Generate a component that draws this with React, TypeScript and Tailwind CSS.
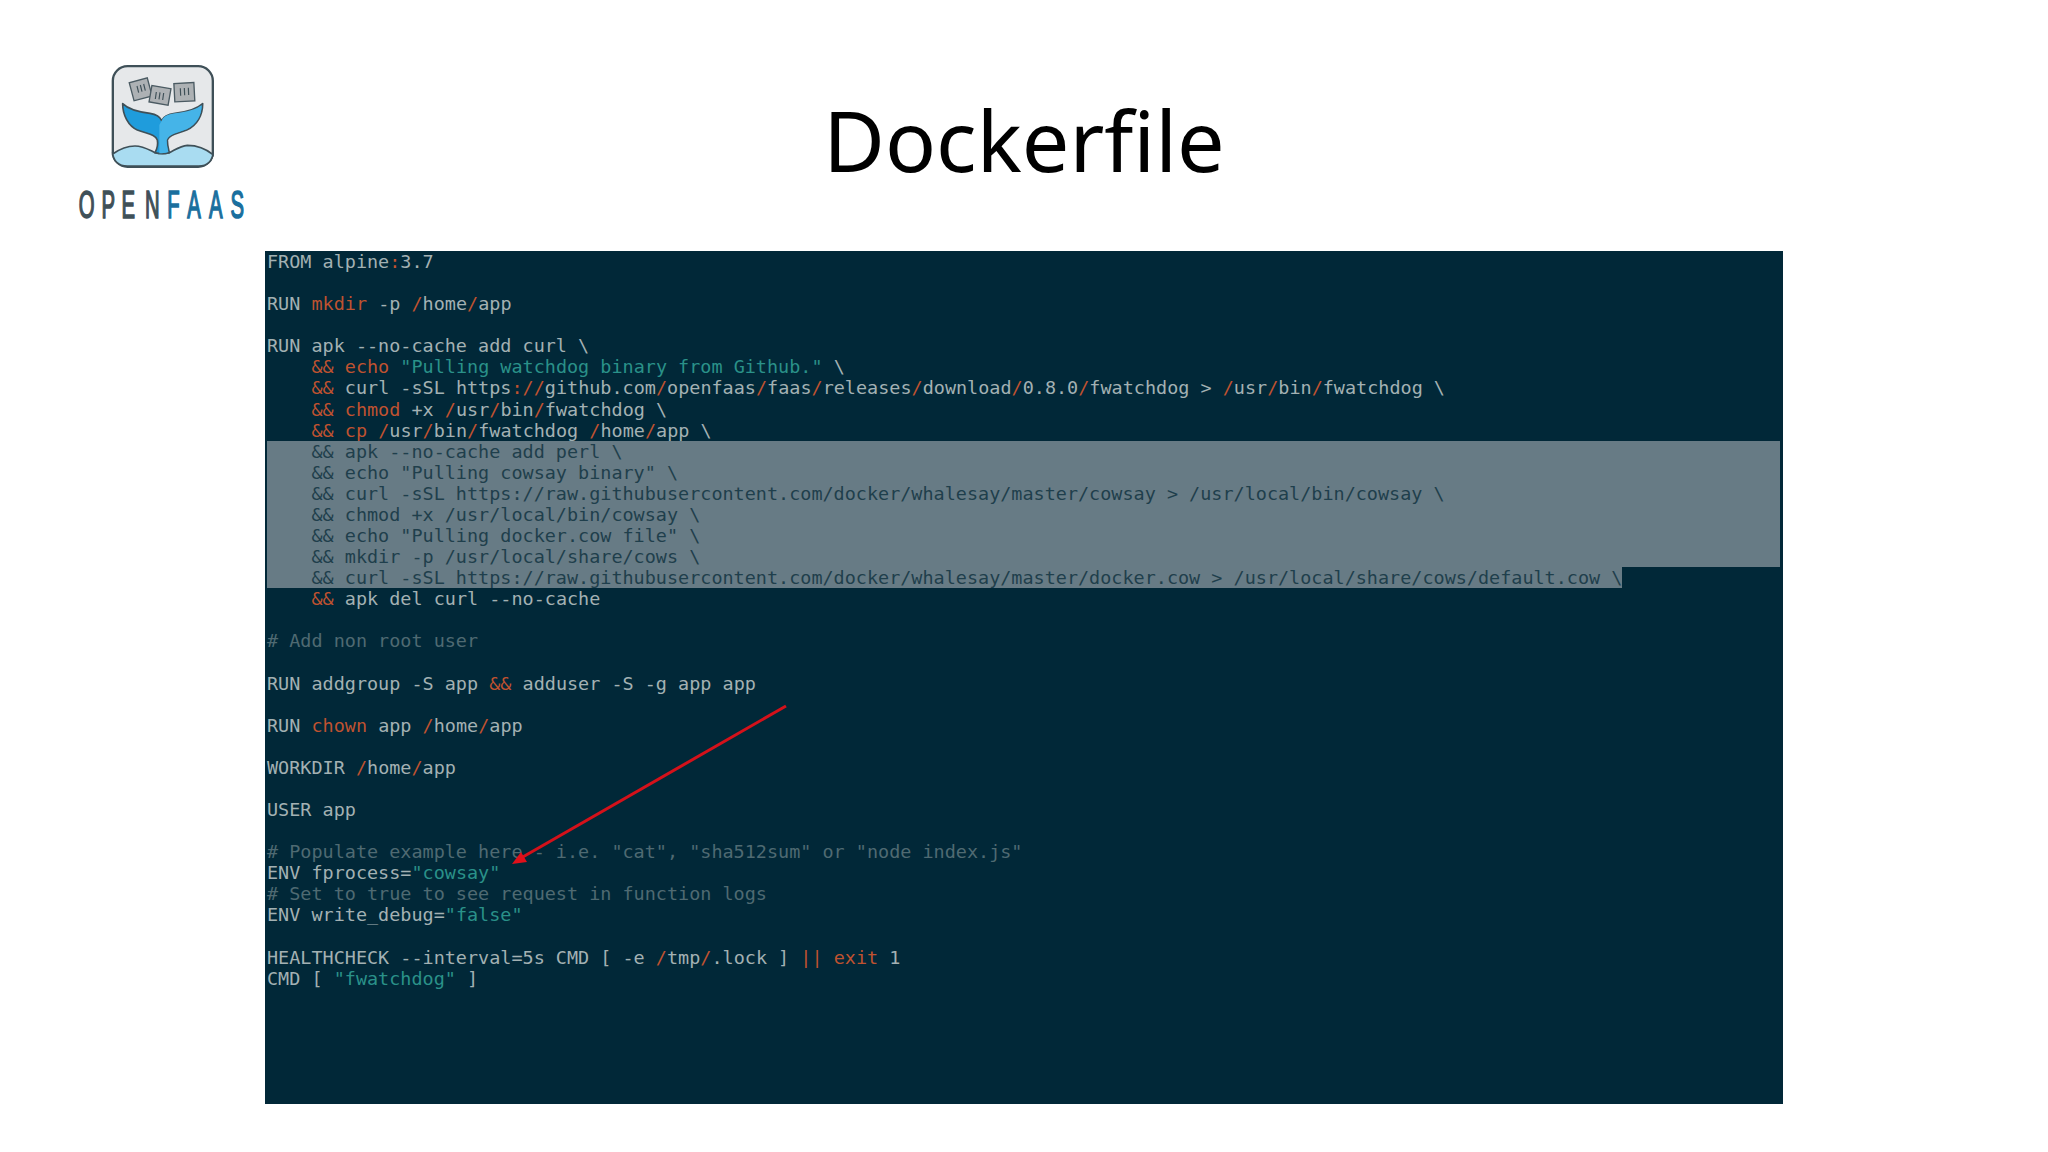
import React from "react"

type Seg = [string, "o" | "t" | "c" | undefined] | string

const lines: Seg[][] = [
  ["FROM alpine", [":", "o"], "3.7"],
  [],
  ["RUN ", ["mkdir", "o"], " -p ", ["/", "o"], "home", ["/", "o"], "app"],
  [],
  ["RUN apk --no-cache add curl \\"],
  ["    ", ["&& echo", "o"], " ", ['"Pulling watchdog binary from Github."', "t"], " \\"],
  ["    ", ["&&", "o"], " curl -sSL https", [":", "o"], ["//", "o"], "github.com", ["/", "o"], "openfaas", ["/", "o"], "faas", ["/", "o"], "releases", ["/", "o"], "download", ["/", "o"], "0.8.0", ["/", "o"], "fwatchdog > ", ["/", "o"], "usr", ["/", "o"], "bin", ["/", "o"], "fwatchdog \\"],
  ["    ", ["&& chmod", "o"], " +x ", ["/", "o"], "usr", ["/", "o"], "bin", ["/", "o"], "fwatchdog \\"],
  ["    ", ["&& cp", "o"], " ", ["/", "o"], "usr", ["/", "o"], "bin", ["/", "o"], "fwatchdog ", ["/", "o"], "home", ["/", "o"], "app \\"],
]

const selected = [
  "    && apk --no-cache add perl \\",
  '    && echo "Pulling cowsay binary" \\',
  "    && curl -sSL https://raw.githubusercontent.com/docker/whalesay/master/cowsay > /usr/local/bin/cowsay \\",
  "    && chmod +x /usr/local/bin/cowsay \\",
  '    && echo "Pulling docker.cow file" \\',
  "    && mkdir -p /usr/local/share/cows \\",
]

const lastSelected = "    && curl -sSL https://raw.githubusercontent.com/docker/whalesay/master/docker.cow > /usr/local/share/cows/default.cow \\"

const rest: Seg[][] = [
  ["    ", ["&&", "o"], " apk del curl --no-cache"],
  [],
  [["# Add non root user", "c"]],
  [],
  ["RUN addgroup -S app ", ["&&", "o"], " adduser -S -g app app"],
  [],
  ["RUN ", ["chown", "o"], " app ", ["/", "o"], "home", ["/", "o"], "app"],
  [],
  ["WORKDIR ", ["/", "o"], "home", ["/", "o"], "app"],
  [],
  ["USER app"],
  [],
  [['# Populate example here - i.e. "cat", "sha512sum" or "node index.js"', "c"]],
  ["ENV fprocess=", ['"cowsay"', "t"]],
  [["# Set to true to see request in function logs", "c"]],
  ["ENV write_debug=", ['"false"', "t"]],
  [],
  ["HEALTHCHECK --interval=5s CMD [ -e ", ["/", "o"], "tmp", ["/", "o"], ".lock ] ", ["||", "o"], " ", ["exit", "o"], " 1"],
  ["CMD [ ", ['"fwatchdog"', "t"], " ]"],
]

function CodeLine({ segs }: { segs: Seg[] }) {
  return (
    <div className="h-[21.08px] whitespace-pre">
      {segs.map((s, i) => {
        if (typeof s === "string") return <span key={i}>{s}</span>
        const cls = s[1] === "o" ? "text-[#bf5230]" : s[1] === "t" ? "text-[#2a9189]" : "text-[#4f6a72]"
        return <span key={i} className={cls}>{s[0]}</span>
      })}
    </div>
  )
}

function Logo() {
  return (
    <svg viewBox="0 0 630 540" className="w-[210px] h-[180px]">
      <rect x="158.5" y="48.5" width="300" height="302" rx="44" fill="#e6e8ea" stroke="#3f5058" strokeWidth="7" />
      <path d="M158 312 C175 300 198 288 225 288 C250 288 268 300 285 308 C300 312 315 312 328 308 C345 300 360 288 382 286 C410 286 440 298 459 314 L459 306 C459 332 442 348 416 348 L202 348 C176 348 158 332 158 306 Z" fill="#a9dcf1" stroke="#3f5058" strokeWidth="5" />
      <path d="M188 161 C205 178 235 186 270 190 C290 193 300 200 305 212 C310 200 322 193 345 190 C380 186 410 178 428 161 C428 195 412 225 380 240 C350 252 330 252 322 270 C322 285 325 295 328 308 C310 312 300 312 285 308 C292 295 295 285 292 270 C285 252 262 252 232 240 C205 228 188 195 188 161 Z" fill="#1f9cdc" stroke="#3f5058" strokeWidth="5" strokeLinejoin="round" />
      <path d="M305 212 C310 200 322 193 345 190 C380 186 410 178 425 165 C425 195 410 223 380 238 C350 250 328 252 320 270 C320 285 323 295 325 306 C315 309 308 310 298 310 L298 225 Z" fill="#45b4e8" />
      <g fill="#adb1b4" stroke="#4a5a62" strokeWidth="4">
        <rect x="214" y="90" width="56" height="56" transform="rotate(-15 242 118)" />
        <rect x="271" y="111" width="58" height="50" transform="rotate(10 300 136)" />
        <rect x="343" y="99" width="60" height="55" transform="rotate(-3 373 126)" />
      </g>
      <g stroke="#3f5058" strokeWidth="3.5" fill="none">
        <path d="M231 108 L236 128 M241 105 L246 125 M251 102 L256 122" />
        <path d="M289 126 L286 147 M300 127 L297 148 M311 129 L308 150" />
        <path d="M361 115 L362 137 M373 114 L374 136 M385 113 L386 135" />
      </g>
      <g style={{ fontFamily: '"Liberation Sans", sans-serif' }} fontSize="117" fontWeight="400" strokeWidth="5">
        <text transform="scale(0.52 1)" y="503" textAnchor="middle" fill="#3f5058" stroke="#3f5058" x="154 279 394 533">OPEN</text>
        <text transform="scale(0.52 1)" y="503" textAnchor="middle" fill="#1a6f9e" stroke="#1a6f9e" x="654 773 898 1023">FAAS</text>
      </g>
    </svg>
  )
}

export default function App() {
  return (
    <div className="w-full h-[1152px] bg-white overflow-hidden">
      <header className="grid grid-cols-[265px_1fr_265px] h-[251px]">
        <div className="pl-[60px] pt-[50px]">
          <Logo />
        </div>
        <h1 className="flex justify-center pt-[83px] text-[84.5px] leading-[114px] text-black [font-family:'Noto_Sans',sans-serif]">
          Dockerfile
        </h1>
      </header>
      <section className="relative ml-[265px] w-[1518px] h-[853px] bg-[#012838]">
        <div className="pl-[2px] pr-[3px] text-[18.47px] leading-[21.08px] text-[#a3b1b3] [font-family:'DejaVu_Sans_Mono',monospace]">
          {lines.map((segs, i) => (
            <CodeLine key={i} segs={segs} />
          ))}
          {selected.map((text, i) => (
            <div key={i} className="h-[21.08px] whitespace-pre bg-[#677b85] text-[#1f3f4c]">
              {text}
            </div>
          ))}
          <div className="h-[21.08px] whitespace-pre">
            <span className="inline-block h-[21.08px] bg-[#677b85] text-[#1f3f4c]">{lastSelected}</span>
          </div>
          {rest.map((segs, i) => (
            <CodeLine key={i} segs={segs} />
          ))}
        </div>
        <svg className="absolute left-0 top-0 w-[1518px] h-[853px]" viewBox="0 0 1518 853">
          <line x1="521" y1="455" x2="256" y2="607" stroke="#d4111a" strokeWidth="3" />
          <polygon points="247,613 256,601 262,611" fill="#e0101a" />
        </svg>
      </section>
    </div>
  )
}
